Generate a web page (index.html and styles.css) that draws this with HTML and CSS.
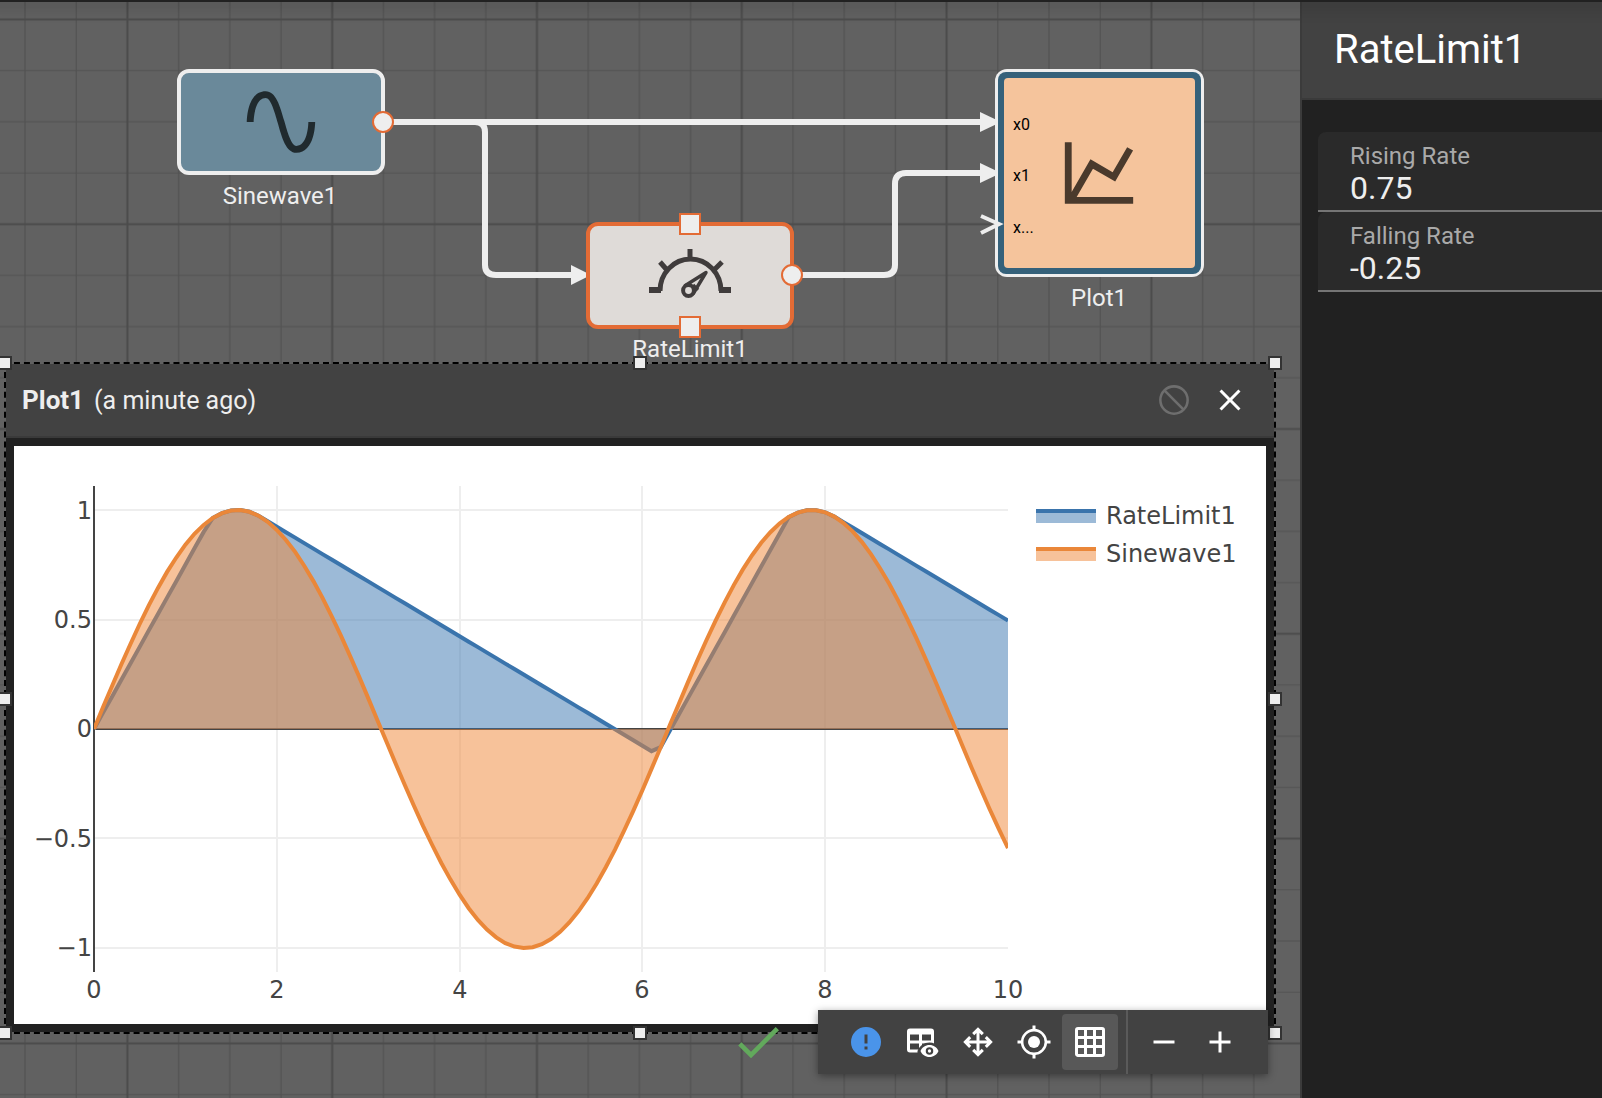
FILE: index.html
```html
<!DOCTYPE html>
<html lang="en">
<head>
  <meta charset="utf-8">
  <meta name="viewport" content="width=device-width, initial-scale=1">
  <title>Block diagram editor</title>
  <link rel="stylesheet" href="styles.css">
</head>
<body>
  <div class="app">
    <div class="topbar"></div>

    <main class="canvas">
      <svg class="diagram" aria-label="Block diagram">
        <defs>
          <pattern id="grid" width="200" height="200" patternUnits="userSpaceOnUse" patternTransform="translate(25 -83) scale(1.024)">
            <path class="grid-minor" d="M50 0V200M150 0V200M0 50H200M0 150H200M0 0H200M0 0V200M200 0V200M0 200H200"/>
            <path class="grid-major" d="M100 0V200M0 100H200"/>
          </pattern>
        </defs>
        <rect width="100%" height="100%" fill="url(#grid)"/>

        <g class="wires">
          <path d="M383 122H982"/>
          <path d="M440 122H475Q485 122 485 132V265Q485 275 496 275H574"/>
          <path d="M792 275H884Q895 275 895 265V184Q895 173 906 173H982"/>
        </g>
        <g class="arrows">
          <path d="M571 265L591 275L571 285Z"/>
          <path d="M980 112L1001 122L980 132Z"/>
          <path d="M980 163L1001 173L980 183Z"/>
        </g>

        <g class="node">
          <rect class="box box-source" x="179" y="71" width="204" height="102" rx="10"/>
          <svg x="240" y="81" width="82" height="82" viewBox="0 0 24 24">
            <path fill="#202a2e" d="M16.5,21C13.5,21 12.31,16.76 11.05,12.28C10.14,9.04 9,5 7.5,5C4.11,5 4,11.93 4,12H2C2,11.63 2.06,3 7.5,3C10.5,3 11.71,7.25 12.97,11.74C13.83,14.8 15,19 16.5,19C19.94,19 20.03,12.07 20,12H22C22,12.37 21.94,21 16.5,21Z"/>
          </svg>
          <circle class="port" cx="383" cy="122" r="10"/>
          <text class="node-label" x="280" y="204">Sinewave1</text>
        </g>

        <g class="node">
          <rect class="box box-selected" x="588" y="224" width="204" height="103" rx="10"/>
          <g class="gauge">
            <path stroke-width="6" d="M649 290H661M719 290H731"/>
            <path stroke-width="5" d="M660 291A30.5 32 0 0 1 721 291M690 249V259M660 262L667 270M722 262L714 270"/>
            <path stroke-width="3.4" stroke-linejoin="round" d="M684.5 286L706 272.5L693 294M693 285L698 290"/>
            <circle stroke-width="4" fill="#dfdbd8" cx="688.5" cy="290.5" r="5.4"/>
          </g>
          <rect class="port" x="680" y="214" width="20" height="20"/>
          <rect class="port" x="680" y="317" width="20" height="20"/>
          <circle class="port" cx="792" cy="275" r="10"/>
          <text class="node-label" x="690" y="357">RateLimit1</text>
        </g>

        <g class="node">
          <rect fill="#eee" x="995" y="69" width="209" height="208" rx="12"/>
          <rect fill="#35617a" x="998" y="72" width="203" height="202" rx="8"/>
          <rect fill="#f5c49c" x="1004" y="78" width="191" height="190" rx="4"/>
          <svg x="1058" y="132" width="82" height="82" viewBox="0 0 24 24">
            <path fill="#4a3a2c" d="M16,11.78L20.24,4.45L21.97,5.45L16.74,14.5L10.23,10.75L5.46,19H22V21H2V3H4V17.54L9.5,8L16,11.78Z"/>
          </svg>
          <path class="open-arrow" d="M981 216L999 224L981 233"/>
          <text class="port-label" x="1013" y="130">x0</text>
          <text class="port-label" x="1013" y="181">x1</text>
          <text class="port-label" x="1013" y="233">x...</text>
          <text class="node-label" x="1099" y="306">Plot1</text>
        </g>
      </svg>

      <section class="plot-window">
        <header class="plot-header">
          <h2 class="plot-title">Plot1</h2>
          <span class="plot-age">(a minute ago)</span>
          <div class="plot-actions">
            <button class="icon-button" type="button" aria-label="Disable" disabled>
              <svg class="icon" viewBox="0 0 24 24"><g fill="none" stroke="#6e6e6e" stroke-width="1.7"><circle cx="12" cy="12" r="9.1"/><path d="M5.6 5.6L18.4 18.4"/></g></svg>
            </button>
            <button class="icon-button" type="button" aria-label="Close">
              <svg class="icon" viewBox="0 0 24 24"><path d="M19,6.41L17.59,5L12,10.59L6.41,5L5,6.41L10.59,12L5,17.59L6.41,19L12,13.41L17.59,19L19,17.59L13.41,12Z"/></svg>
            </button>
          </div>
        </header>
        <div class="plot-body">
          <svg class="chart" viewBox="0 0 1252 578" role="img" aria-label="RateLimit1 and Sinewave1 over time">
            <path class="chart-grid" d="M263 40V526M446 40V526M628 40V526M811 40V526M80 64H994M80 174H994M80 392H994M80 502H994"/>
            <path class="chart-zero" d="M80 40V526M80 283H994"/>
            <clipPath id="plot-area"><rect x="80" y="40" width="914" height="486"/></clipPath>
            <g clip-path="url(#plot-area)">
              <path class="area-blue" id="rate-area"/>
              <path class="line-blue" id="rate-line"/>
              <path class="area-orange" id="sine-area"/>
              <path class="line-orange" id="sine-line"/>
            </g>
            <g class="chart-text" text-anchor="end">
              <text x="78" y="73">1</text>
              <text x="78" y="182">0.5</text>
              <text x="78" y="291">0</text>
              <text x="78" y="401">−0.5</text>
              <text x="78" y="510">−1</text>
            </g>
            <g class="chart-text" text-anchor="middle">
              <text x="80" y="552">0</text>
              <text x="263" y="552">2</text>
              <text x="446" y="552">4</text>
              <text x="628" y="552">6</text>
              <text x="811" y="552">8</text>
              <text x="994" y="552">10</text>
            </g>
            <rect class="area-blue" x="1022" y="65" width="60" height="12"/>
            <path class="line-blue" d="M1022 65H1082"/>
            <rect class="area-orange" x="1022" y="103" width="60" height="12"/>
            <path class="line-orange" d="M1022 103H1082"/>
            <g class="chart-text">
              <text x="1092" y="78">RateLimit1</text>
              <text x="1092" y="116">Sinewave1</text>
            </g>
          </svg>
        </div>
        <i class="handle top left"></i><i class="handle top center"></i><i class="handle top right"></i>
        <i class="handle middle left"></i><i class="handle middle right"></i>
        <i class="handle bottom left"></i><i class="handle bottom center"></i><i class="handle bottom right"></i>
      </section>

      <div class="dock">
        <svg class="status" viewBox="0 0 24 24" role="img" aria-label="Model is valid"><path d="M21,7L9,19L3.5,13.5L4.91,12.09L9,16.17L19.59,5.59L21,7Z"/></svg>
        <div class="toolbar" role="toolbar">
          <button class="icon-button" type="button" aria-label="Messages">
            <svg class="icon info" viewBox="0 0 24 24"><path d="M13,13H11V7H13M13,17H11V15H13M12,2A10,10 0 0,0 2,12A10,10 0 0,0 12,22A10,10 0 0,0 22,12A10,10 0 0,0 12,2Z"/></svg>
          </button>
          <button class="icon-button" type="button" aria-label="Show data">
            <svg class="icon" viewBox="0 0 24 24">
              <path fill-rule="evenodd" d="M4 3H18A2 2 0 0 1 20 5V17A2 2 0 0 1 18 19H4A2 2 0 0 1 2 17V5A2 2 0 0 1 4 3ZM4 7V11H10V7ZM12 7V11H18V7ZM4 13V17H10V13ZM12 13V17H18V13Z"/>
              <path fill="#424242" d="M9 18C10.3 14.6 13.400 12.400 17 12.400C19.500 12.400 21.800 13.500 23.300 15.200V22H9Z"/>
              <path fill-rule="evenodd" d="M17 14C14.270 14 11.940 15.660 11 18C11.940 20.340 14.270 22 17 22C19.730 22 22.060 20.340 23 18C22.060 15.660 19.730 14 17 14ZM17 15.500A2.500 2.500 0 1 1 17 20.500A2.500 2.500 0 1 1 17 15.500Z"/>
              <circle cx="17" cy="18" r="1.1"/>
            </svg>
          </button>
          <button class="icon-button" type="button" aria-label="Fit to view">
            <svg class="icon" viewBox="0 0 24 24"><path d="M13,11H18L16.5,9.5L17.92,8.08L21.84,12L17.92,15.92L16.5,14.5L18,13H13V18L14.5,16.5L15.92,17.92L12,21.84L8.08,17.92L9.5,16.5L11,18V13H6L7.5,14.5L6.08,15.92L2.16,12L6.08,8.08L7.5,9.5L6,11H11V6L9.5,7.5L8.08,6.08L12,2.16L15.92,6.08L14.5,7.5L13,6V11Z"/></svg>
          </button>
          <button class="icon-button" type="button" aria-label="Center">
            <svg class="icon" viewBox="0 0 24 24"><circle cx="12" cy="12" r="4"/><g fill="none" stroke="#fff"><circle cx="12" cy="12" r="7.9" stroke-width="1.7"/><path stroke-width="2" d="M12 1V4M12 20V23M1 12H4M20 12H23"/></g></svg>
          </button>
          <button class="icon-button active" type="button" aria-label="Toggle grid" aria-pressed="true">
            <svg class="icon" viewBox="0 0 24 24"><path d="M10,4V8H14V4H10M16,4V8H20V4H16M16,10V14H20V10H16M16,16V20H20V16H16M14,20V16H10V20H14M8,20V16H4V20H8M8,14V10H4V14H8M8,8V4H4V8H8M10,14H14V10H10V14M4,2H20A2,2 0 0,1 22,4V20A2,2 0 0,1 20,22H4C2.92,22 2,21.1 2,20V4A2,2 0 0,1 4,2Z"/></svg>
          </button>
          <span class="divider"></span>
          <button class="icon-button" type="button" aria-label="Zoom out">
            <svg class="icon" viewBox="0 0 24 24"><path d="M19,13H5V11H19V13Z"/></svg>
          </button>
          <button class="icon-button" type="button" aria-label="Zoom in">
            <svg class="icon" viewBox="0 0 24 24"><path d="M19,13H13V19H11V13H5V11H11V5H13V11H19V13Z"/></svg>
          </button>
        </div>
      </div>
    </main>

    <aside class="panel">
      <header class="panel-header"><h1 class="panel-title">RateLimit1</h1></header>
      <form class="fields">
        <div class="field">
          <label class="field-label" for="rising">Rising Rate</label>
          <input class="field-input" id="rising" type="text" value="0.75">
        </div>
        <div class="field">
          <label class="field-label" for="falling">Falling Rate</label>
          <input class="field-input" id="falling" type="text" value="-0.25">
        </div>
      </form>
    </aside>
  </div>
  <script src="chart.js"></script>
</body>
</html>
```

FILE: styles.css
```css
* {
  box-sizing: border-box;
}

body {
  margin: 0;
  background: #212121;
  color: #eee;
  font-family: Roboto, "Liberation Sans", sans-serif;
}

.app {
  display: flex;
  min-height: 100vh;
  position: relative;
  overflow: hidden;
}

.topbar {
  position: absolute;
  top: 0;
  left: -16px;
  right: -16px;
  height: 2px;
  background: #212121;
  box-shadow: 0 2px 16px rgba(0, 0, 0, 0.7);
  z-index: 5;
}

/* Canvas */
.canvas {
  flex: 1;
  min-width: 0;
  position: relative;
  overflow: hidden;
  background: #616161;
}

.diagram {
  display: block;
  position: absolute;
  width: 100%;
  height: 100%;
}

.grid-minor {
  stroke: #525252;
  stroke-width: 1.2;
}

.grid-major {
  stroke: #4b4b4b;
  stroke-width: 2;
}

.wires {
  fill: none;
  stroke: #eee;
  stroke-width: 6;
}

.arrows {
  fill: #eee;
}

.open-arrow {
  fill: none;
  stroke: #eee;
  stroke-width: 4;
}

.box {
  stroke-width: 4;
}

.box-source {
  fill: #6a899a;
  stroke: #eee;
}

.box-selected {
  fill: #dfdbd8;
  stroke: #e36b35;
}

.gauge {
  fill: none;
  stroke: #403c3c;
}

.port {
  fill: #eee;
  stroke: #e36b35;
  stroke-width: 2;
}

.node-label {
  fill: #eee;
  font-size: 24px;
  text-anchor: middle;
}

.port-label {
  fill: #000;
  font-size: 16px;
}

/* Plot window */
.plot-window {
  position: absolute;
  top: 362px;
  left: 4px;
  right: 24px;
  border: 2px dashed #000;
}

.plot-header {
  display: flex;
  align-items: center;
  gap: 10px;
  height: 74px;
  padding: 0 16px;
  background: #424242;
  border-bottom: 2px solid #3a3a3a;
}

.plot-title {
  margin: 0;
  font-size: 26px;
  font-weight: 700;
}

.plot-age {
  font-size: 25px;
}

.plot-actions {
  display: flex;
  margin-left: auto;
}

.plot-body {
  padding: 8px;
  background: #212121;
}

.chart {
  display: block;
  width: 100%;
  background: #fff;
}

.chart-grid {
  fill: none;
  stroke: #eee;
  stroke-width: 2;
}

.chart-zero {
  fill: none;
  stroke: #444;
  stroke-width: 2;
}

.chart-text {
  fill: #444;
  font-family: "DejaVu Sans", sans-serif;
  font-size: 24px;
}

.area-blue {
  fill: rgba(58, 118, 175, 0.5);
}

.area-orange {
  fill: rgba(239, 134, 54, 0.5);
}

.line-blue,
.line-orange {
  fill: none;
  stroke-width: 4;
}

.line-blue {
  stroke: #3a74ac;
}

.line-orange {
  stroke: #ea8739;
}

.handle {
  position: absolute;
  width: 14px;
  height: 14px;
  background: #eee;
  border: 2px solid #333;
}

.top {
  top: -8px;
}

.middle {
  top: calc(50% - 6px);
}

.bottom {
  bottom: -8px;
}

.left {
  left: -8px;
}

.center {
  left: calc(50% - 7px);
}

.right {
  right: -8px;
}

/* Toolbar */
.dock {
  position: absolute;
  right: 32px;
  bottom: 24px;
  display: flex;
  align-items: center;
  gap: 32px;
}

.status {
  width: 56px;
  height: 56px;
  fill: #62a95c;
}

.toolbar {
  display: flex;
  align-items: center;
  height: 64px;
  padding: 0 20px;
  background: #424242;
  box-shadow: 0 2px 8px rgba(0, 0, 0, 0.4);
}

.icon-button {
  display: flex;
  align-items: center;
  justify-content: center;
  width: 56px;
  height: 56px;
  padding: 0;
  border: 0;
  border-radius: 4px;
  background: none;
}

.active {
  background: #585858;
}

.icon {
  width: 36px;
  height: 36px;
  fill: #fff;
}

.info {
  fill: #4a94ea;
}

.divider {
  align-self: stretch;
  width: 2px;
  margin: 0 8px;
  background: #5a5a5a;
}

/* Properties panel */
.panel {
  flex: none;
  width: 302px;
  border-left: 2px solid #3b3b3b;
  background: #212121;
}

.panel-header {
  display: flex;
  align-items: center;
  height: 100px;
  padding: 0 32px;
  background: #424242;
  border-bottom: 2px solid #3a3a3a;
}

.panel-title {
  margin: 0;
  color: #fff;
  font-size: 40px;
  font-weight: 400;
}

.fields {
  padding: 32px 0 0 16px;
}

.field {
  display: flex;
  flex-direction: column;
  padding: 10px 0 4px 32px;
  background: #2a2a2a;
  border-bottom: 2px solid #757575;
  border-top-left-radius: 8px;
}

.field-label {
  color: #a9a9a9;
  font-size: 24px;
  line-height: 28px;
}

.field-input {
  width: 100%;
  height: 36px;
  padding: 0;
  border: 0;
  outline: 0;
  background: none;
  color: #eee;
  font-family: inherit;
  font-size: 32px;
  line-height: 36px;
}
```

FILE: chart.js
```js
// Simulates the sine source and the rate limiter, then draws both traces.
const RISING = 0.75;
const FALLING = -0.25;
const END = 10;

const px = (t) => (80 + t * 91.4).toFixed(1);
const py = (v) => (283 - v * 219).toFixed(1);

const sine = [[0, 0]];
const rate = [[0, 0]];
for (let i = 1; i <= END * 10; i++) {
  const input = Math.sin(i / 10);
  const previous = rate[i - 1][1];
  const step = Math.min(RISING / 10, Math.max(FALLING / 10, input - previous));
  sine.push([i / 10, input]);
  rate.push([i / 10, previous + step]);
}

function draw(name, points) {
  const line = points.map(([t, v]) => px(t) + " " + py(v)).join("L");
  document.getElementById(name + "-line").setAttribute("d", "M" + line);
  document.getElementById(name + "-area").setAttribute(
    "d", "M" + px(0) + " " + py(0) + "L" + line + "L" + px(END) + " " + py(0) + "Z");
}

draw("rate", rate);
draw("sine", sine);
```
